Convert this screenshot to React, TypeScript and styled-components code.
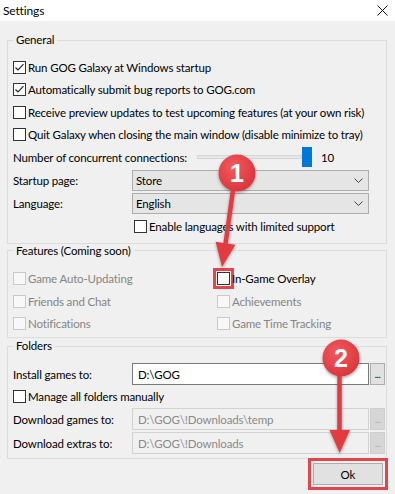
import React from "react";
import styled, { createGlobalStyle } from "styled-components";

const Global = createGlobalStyle`
  html, body { margin: 0; padding: 0; background: #f0f0f0; }
  #root { width: 395px; height: 494px; }
`;

const Window = styled.div`
  position: relative;
  width: 395px;
  height: 494px;
  overflow: hidden;
  background: #f0f0f0;
  font-family: Lato, "Noto Sans", sans-serif;
  font-size: 11.5px;
  letter-spacing: -0.15px;
  color: #000;
`;

const TitleBar = styled.div`
  height: 21px;
  background: #fff;
  display: flex;
  align-items: center;
  justify-content: space-between;
  padding: 0 7px 0 3px;
`;

const Title = styled.span`
  font-size: 12px;
  line-height: 14px;
`;

const Body = styled.div`
  padding: 12px 8px 0 7px;
  display: flex;
  flex-direction: column;
`;

const Group = styled.fieldset<{ $pt: number; $pb: number; $pr?: number; $mt?: number }>`
  margin: ${(p) => p.$mt ?? 0}px 0 0 0;
  border: 1px solid #dcdcdc;
  padding: ${(p) => p.$pt}px ${(p) => p.$pr ?? 5}px ${(p) => p.$pb}px 5px;
  min-width: 0;
`;

const Legend = styled.legend`
  padding: 0 3px;
  line-height: 14px;
  font-size: 11.5px;
`;

const Row = styled.div<{ $h: number; $indent?: number }>`
  display: flex;
  align-items: center;
  height: ${(p) => p.$h}px;
  padding-left: ${(p) => p.$indent ?? 0}px;
  white-space: nowrap;
`;

const CheckLabel = styled.span<{ $disabled?: boolean }>`
  margin-left: 2px;
  color: ${(p) => (p.$disabled ? "#858585" : "#000")};
`;

const Box = styled.span<{ $disabled?: boolean; $highlight?: boolean }>`
  box-sizing: border-box;
  width: 13px;
  height: 13px;
  flex: none;
  display: inline-flex;
  border: 1px solid ${(p) => (p.$disabled ? "#c9c9c9" : "#333")};
  background: ${(p) => (p.$disabled ? "#f8f8f8" : "#fff")};
  outline: ${(p) => (p.$highlight ? "3px solid #e2454b" : "none")};
  outline-offset: 1px;
`;

const FieldGrid = styled.div<{ $h: number }>`
  display: grid;
  grid-template-columns: 118px 237px 15px;
  column-gap: 1px;
  align-items: center;
  height: ${(p) => p.$h}px;
  white-space: nowrap;
`;

const Select = styled.div`
  box-sizing: border-box;
  height: 21px;
  border: 1px solid #adadad;
  background: #e5e5e5;
  display: flex;
  align-items: center;
  justify-content: space-between;
  padding: 0 5px 0 3px;
`;

const TextBox = styled.div<{ $disabled?: boolean }>`
  box-sizing: border-box;
  height: 22px;
  border: 1px solid ${(p) => (p.$disabled ? "#d2d2d2" : "#7a7a7a")};
  background: ${(p) => (p.$disabled ? "#f0f0f0" : "#fff")};
  color: ${(p) => (p.$disabled ? "#8a8a8a" : "#000")};
  display: flex;
  align-items: center;
  padding-left: 5px;
`;

const DotsButton = styled.div<{ $disabled?: boolean }>`
  box-sizing: border-box;
  height: 22px;
  border: 1px solid ${(p) => (p.$disabled ? "#cfcfcf" : "#adadad")};
  background: ${(p) => (p.$disabled ? "#d6d6d6" : "#e1e1e1")};
  color: ${(p) => (p.$disabled ? "#a9a9a9" : "#000")};
  font-size: 10px;
  display: flex;
  align-items: center;
  justify-content: center;
  letter-spacing: -0.5px;
`;

const SliderLabel = styled.span`
  width: 184px;
  flex: none;
`;

const Track = styled.div`
  width: 115px;
  height: 20px;
  display: flex;
  align-items: center;
`;

const TrackLine = styled.div`
  flex: 1;
  height: 2px;
  background: #e7e7e7;
  border: 1px solid #d6d6d6;
`;

const Thumb = styled.div`
  width: 10px;
  height: 20px;
  background: #0078d7;
`;

const SliderValue = styled.span`
  margin-left: 9px;
`;

const FeatureGrid = styled.div`
  display: grid;
  grid-template-columns: 204px 1fr;
  grid-auto-rows: 22.5px;
  align-items: center;
  white-space: nowrap;
`;

const Cell = styled.div`
  display: flex;
  align-items: center;
`;

const Footer = styled.div`
  display: flex;
  justify-content: flex-end;
  padding: 4px 4px 0 0;
`;

const OkButton = styled.button`
  box-sizing: border-box;
  width: 70px;
  height: 22px;
  border: 1px solid #adadad;
  background: #e1e1e1;
  font-family: inherit;
  font-size: 11.5px;
  color: #000;
  padding: 0;
  outline: 3px solid #e2454b;
  outline-offset: 2px;
`;

const Overlay = styled.svg`
  position: absolute;
  left: 0;
  top: 0;
  pointer-events: none;
`;

const Badge = styled.text`
  font-family: "Liberation Sans", Arial, sans-serif;
  font-weight: bold;
  font-size: 25px;
  fill: #fff;
`;

const Check: React.FC<{ checked?: boolean; disabled?: boolean; highlight?: boolean }> = ({
  checked,
  disabled,
  highlight,
}) => (
  <Box $disabled={disabled} $highlight={highlight}>
    {checked && (
      <svg width="11" height="11" viewBox="0 0 11 11">
        <path d="M1.5 5.5 L4 8 L9.5 2.2" fill="none" stroke="#222" strokeWidth="1.1" />
      </svg>
    )}
  </Box>
);

const Chevron = () => (
  <svg width="9" height="5" viewBox="0 0 9 5">
    <path d="M0.5 0.5 L4.5 4.5 L8.5 0.5" fill="none" stroke="#444" strokeWidth="1" />
  </svg>
);

export default function App() {
  return (
    <>
      <Global />
      <Window>
        <TitleBar>
          <Title>Settings</Title>
          <svg width="11" height="11" viewBox="0 0 11 11">
            <path d="M0.5 0.5 L10.5 10.5 M10.5 0.5 L0.5 10.5" stroke="#111" strokeWidth="1" />
          </svg>
        </TitleBar>
        <Body>
          <Group $pt={9} $pb={5}>
            <Legend>General</Legend>
            <Row $h={22.5}>
              <Check checked />
              <CheckLabel>Run GOG Galaxy at Windows startup</CheckLabel>
            </Row>
            <Row $h={22.5}>
              <Check checked />
              <CheckLabel>Automatically submit bug reports to GOG.com</CheckLabel>
            </Row>
            <Row $h={22.5}>
              <Check />
              <CheckLabel>Receive preview updates to test upcoming features (at your own risk)</CheckLabel>
            </Row>
            <Row $h={22.5}>
              <Check />
              <CheckLabel>Quit Galaxy when closing the main window (disable minimize to tray)</CheckLabel>
            </Row>
            <Row $h={22.5}>
              <SliderLabel>Number of concurrent connections:</SliderLabel>
              <Track>
                <TrackLine />
                <Thumb />
              </Track>
              <SliderValue>10</SliderValue>
            </Row>
            <FieldGrid $h={23}>
              <span>Startup page:</span>
              <Select>
                <span>Store</span>
                <Chevron />
              </Select>
            </FieldGrid>
            <FieldGrid $h={23}>
              <span>Language:</span>
              <Select>
                <span>English</span>
                <Chevron />
              </Select>
            </FieldGrid>
            <Row $h={23} $indent={121}>
              <Check />
              <CheckLabel>Enable languages with limited support</CheckLabel>
            </Row>
          </Group>

          <Group $pt={10} $pb={2}>
            <Legend>Features (Coming soon)</Legend>
            <FeatureGrid>
              <Cell>
                <Check disabled />
                <CheckLabel $disabled>Game Auto-Updating</CheckLabel>
              </Cell>
              <Cell>
                <Check highlight />
                <CheckLabel>In-Game Overlay</CheckLabel>
              </Cell>
              <Cell>
                <Check disabled />
                <CheckLabel $disabled>Friends and Chat</CheckLabel>
              </Cell>
              <Cell>
                <Check disabled />
                <CheckLabel $disabled>Achievements</CheckLabel>
              </Cell>
              <Cell>
                <Check disabled />
                <CheckLabel $disabled>Notifications</CheckLabel>
              </Cell>
              <Cell>
                <Check disabled />
                <CheckLabel $disabled>Game Time Tracking</CheckLabel>
              </Cell>
            </FeatureGrid>
          </Group>

          <Group $pt={9} $pb={3} $pr={2} $mt={1}>
            <Legend>Folders</Legend>
            <FieldGrid $h={24}>
              <span>Install games to:</span>
              <TextBox>D:\GOG</TextBox>
              <DotsButton>...</DotsButton>
            </FieldGrid>
            <Row $h={21}>
              <Check />
              <CheckLabel>Manage all folders manually</CheckLabel>
            </Row>
            <FieldGrid $h={24}>
              <span>Download games to:</span>
              <TextBox $disabled>D:\GOG\!Downloads\temp</TextBox>
              <DotsButton $disabled>...</DotsButton>
            </FieldGrid>
            <FieldGrid $h={24}>
              <span>Download extras to:</span>
              <TextBox $disabled>D:\GOG\!Downloads</TextBox>
              <DotsButton $disabled>...</DotsButton>
            </FieldGrid>
          </Group>

          <Footer>
            <OkButton>Ok</OkButton>
          </Footer>
        </Body>

        <Overlay width="395" height="494" viewBox="0 0 395 494">
          <defs>
            <radialGradient id="bg" cx="0.4" cy="0.35" r="0.7">
              <stop offset="0" stopColor="#f25a5e" />
              <stop offset="1" stopColor="#d9343a" />
            </radialGradient>
            <filter id="sh" x="-40%" y="-40%" width="180%" height="180%">
              <feDropShadow dx="0" dy="1.5" stdDeviation="1.8" floodColor="#000" floodOpacity="0.35" />
            </filter>
          </defs>
          <g filter="url(#sh)">
            <line x1="233" y1="190" x2="225.5" y2="244" stroke="#e23b40" strokeWidth="4.5" />
            <polygon points="215.6,241.8 235.4,244.8 222,267" fill="#e23b40" />
            <circle cx="237" cy="173" r="18.5" fill="url(#bg)" />
            <line x1="339.5" y1="375" x2="339.5" y2="432" stroke="#e23b40" strokeWidth="4.5" />
            <polygon points="329.5,430 350,430 339.7,453" fill="#e23b40" />
            <circle cx="341" cy="358" r="18.5" fill="url(#bg)" />
          </g>
          <Badge x="237" y="182" textAnchor="middle">1</Badge>
          <Badge x="341" y="367" textAnchor="middle">2</Badge>
        </Overlay>
      </Window>
    </>
  );
}
